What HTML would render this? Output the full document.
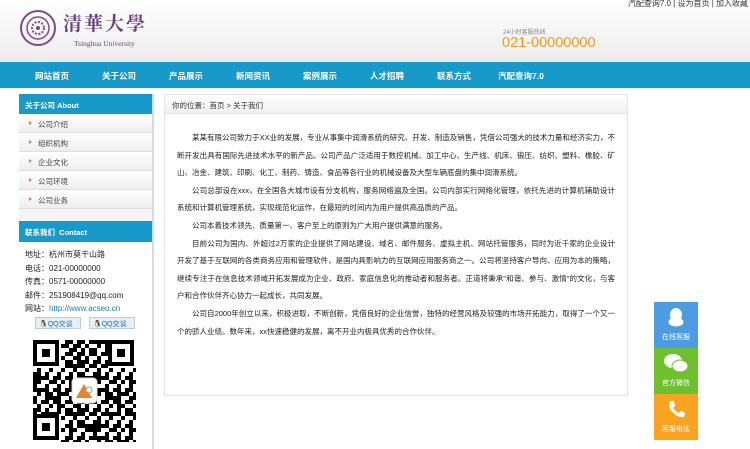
<!DOCTYPE html>
<html><head><meta charset="utf-8"><style>
*{margin:0;padding:0;box-sizing:border-box}
body{width:750px;height:449px;overflow:hidden;background:#fff;font-family:"Liberation Sans","Noto Sans CJK SC",sans-serif;color:#333;position:relative}
.hdr{position:absolute;left:0;top:0;width:750px;height:62px;background:linear-gradient(#fff,#ececec)}
.toplinks{position:absolute;right:2px;top:-2px;font-size:8px;color:#333}
.nav{position:absolute;left:0;top:62px;width:750px;height:26px;background:#1799c9}
.nav span{position:absolute;top:8px;font-size:8.5px;color:#fff;font-weight:bold}
.side{position:absolute;left:19px;top:94px;width:133px}
.sh{height:20px;background:#1799c9;color:#fff;font-size:7.5px;font-weight:bold;padding:6px 0 0 6px}
.item{height:19px;background:linear-gradient(#fff,#eee);border-bottom:1px solid #ddd;font-size:7.5px;padding:5px 0 0 19px;position:relative;color:#444}
.item:before{content:"";position:absolute;left:10px;top:7px;border-left:3px solid #e08030;border-top:2px solid transparent;border-bottom:2px solid transparent}
.shadow{position:absolute;left:152px;top:94px;width:2px;height:355px;background:#d8d8d8}
.contact{font-size:8px;line-height:13.6px;padding:6px 0 0 6px;color:#222}
.crumb{position:absolute;left:164px;top:94px;width:464px;height:302px;border:1px solid #e3e3e3}
.crumb .b{height:19px;background:linear-gradient(#fff,#f0f0f0);border-bottom:1px solid #e3e3e3;font-size:7.5px;padding:5px 0 0 7px;color:#333}
.txt{position:absolute;left:177px;top:129px;width:438px;font-size:7.5px;line-height:17.6px;color:#222;text-align:justify}
.txt p{text-indent:15px}
.fb{position:absolute;left:654px;width:44px;height:46px;color:#fff;font-size:7px;text-align:center}
</style></head><body>
<div class="hdr">
<svg style="position:absolute;left:19px;top:9px" width="38" height="38"><circle cx="19" cy="19" r="17" fill="none" stroke="#7a4c8c" stroke-width="2"/><circle cx="19" cy="19" r="11" fill="none" stroke="#7a4c8c" stroke-width="1.5"/><circle cx="19" cy="19" r="6" fill="none" stroke="#7a4c8c" stroke-width="2" stroke-dasharray="2 1.5"/><circle cx="19" cy="19" r="2" fill="#7a4c8c"/></svg>
<div style="position:absolute;left:63px;top:9px;font-family:'Noto Serif CJK SC',serif;font-size:19px;color:#6a3f80;font-weight:bold;letter-spacing:2px">清華大學</div>
<div style="position:absolute;left:74px;top:39px;font-family:'Liberation Serif',serif;font-size:7.5px;color:#6a3f80">Tsinghua University</div>
<div class="toplinks">汽配查询7.0 | 设为首页 | 加入收藏</div>
<div style="position:absolute;left:503px;top:27px;font-size:6px;color:#888">24小时客服热线</div>
<div style="position:absolute;left:502px;top:35px;font-size:14.5px;color:#f09a20">021-00000000</div>
</div>
<div class="nav"><span style="left:35px">网站首页</span><span style="left:102px">关于公司</span><span style="left:169px">产品展示</span><span style="left:236px">新闻资讯</span><span style="left:303px">案例展示</span><span style="left:370px">人才招聘</span><span style="left:437px">联系方式</span><span style="left:498px">汽配查询7.0</span></div>
<div class="shadow"></div>
<div class="side">
<div class="sh">关于公司 About</div>
<div class="item">公司介绍</div><div class="item">组织机构</div><div class="item">企业文化</div><div class="item">公司环境</div><div class="item">公司业务</div>
<div style="height:12px;background:#f4f4f4"></div>
<div class="sh" style="height:21px">联系我们 &nbsp;Contact</div>
<div class="contact">地址：杭州市莫干山路<br>电话：021-00000000<br>传真：0571-00000000<br>邮件：251908419@qq.com<br>网站：<span style="color:#1a7cc0">http://www.acseo.cn</span></div>
<div style="position:relative;height:16px"><span style="position:absolute;left:16px;top:1px;width:46px;height:12px;background:#e6eef6;border:1px solid #bcd;font-size:7px;color:#1a6cb0;padding:1px 0 0 3px">🐧QQ交谈</span><span style="position:absolute;left:70px;top:1px;width:46px;height:12px;background:#e6eef6;border:1px solid #bcd;font-size:7px;color:#1a6cb0;padding:1px 0 0 3px">🐧QQ交谈</span></div>
<svg style="position:absolute;left:6px;top:238px" width="120" height="117"><rect width="120" height="117" fill="#fff"/>
<defs><pattern id="p1" width="12" height="12" patternUnits="userSpaceOnUse"><rect x="0" y="0" width="4" height="4"/><rect x="8" y="4" width="4" height="8"/><rect x="4" y="8" width="4" height="4"/></pattern><pattern id="p2" width="20" height="16" patternUnits="userSpaceOnUse"><rect x="4" y="0" width="8" height="4"/><rect x="12" y="8" width="4" height="8"/><rect x="0" y="12" width="4" height="4"/></pattern></defs>
<rect x="8" y="8" width="103" height="102" fill="url(#p1)"/><rect x="8" y="8" width="103" height="102" fill="url(#p2)"/>
<g fill="#fff"><rect x="8" y="8" width="28" height="28"/><rect x="83" y="8" width="28" height="28"/><rect x="8" y="82" width="28" height="28"/></g>
<g fill="none" stroke="#000" stroke-width="4"><rect x="10" y="10" width="22" height="22"/><rect x="85" y="10" width="22" height="22"/><rect x="10" y="84" width="22" height="22"/></g>
<rect x="17" y="17" width="8" height="8"/><rect x="92" y="17" width="8" height="8"/><rect x="17" y="91" width="8" height="8"/>
<rect x="47" y="46" width="25" height="25" rx="4" fill="#fff" stroke="#ddd"/><path d="M51 66 L59 52 L67 66Z" fill="#e8832a"/><circle cx="64" cy="58" r="3" fill="#fff" stroke="#999"/></svg>
</div>
<div class="crumb"><div class="b">你的位置：首页 &gt; 关于我们</div></div>
<div class="txt">
<p>某某有限公司致力于XX业的发展，专业从事集中润滑系统的研究、开发、制造及销售，凭借公司强大的技术力量和经济实力，不断开发出具有国际先进技术水平的新产品。公司产品广泛适用于数控机械、加工中心、生产线、机床、锻压、纺织、塑料、橡胶、矿山、冶金、建筑、印刷、化工、制药、铸造、食品等各行业的机械设备及大型车辆底盘的集中润滑系统。</p>
<p>公司总部设在xxx，在全国各大城市设有分支机构，服务网络遍及全国。公司内部实行网络化管理，依托先进的计算机辅助设计系统和计算机管理系统，实现规范化运作，在最短的时间内为用户提供高品质的产品。</p>
<p>公司本着技术领先、质量第一、客户至上的原则为广大用户提供满意的服务。</p>
<p>目前公司为国内、外超过2万家的企业提供了网站建设、域名、邮件服务、虚拟主机、网站托管服务，同时为近千家的企业设计开发了基于互联网的各类商务应用和管理软件，是国内具影响力的互联网应用服务商之一。公司将坚持客户导向、应用为本的策略，继续专注于在信息技术领域开拓发展成为企业、政府、家庭信息化的推动者和服务者。正道将秉承"和谐、参与、激情"的文化，与客户和合作伙伴齐心协力一起成长，共同发展。</p>
<p>公司自2000年创立以来，积极进取，不断创新，凭借良好的企业信誉，独特的经营风格及较强的市场开拓能力，取得了一个又一个的骄人业绩。数年来，xx快速稳健的发展，离不开业内极具优秀的合作伙伴。</p>
</div>
<div class="fb" style="top:302px;background:#4d9be0"><svg width="16" height="20" style="margin-top:5px"><ellipse cx="8" cy="8" rx="6" ry="7" fill="#fff"/><ellipse cx="8" cy="15" rx="7.5" ry="4.5" fill="#fff"/></svg><div style="margin-top:3px">在线客服</div></div>
<div class="fb" style="top:348px;background:#6ec02f"><svg width="26" height="20" style="margin-top:5px"><ellipse cx="10" cy="8" rx="9" ry="7" fill="#fff"/><ellipse cx="17" cy="13" rx="8" ry="6" fill="#fff" stroke="#6ec02f"/></svg><div style="margin-top:3px">官方微信</div></div>
<div class="fb" style="top:394px;background:#f8a422"><svg width="18" height="20" style="margin-top:5px"><path d="M3 2 L7 2 L8 7 L6 9 Q9 13 12 14 L14 12 L18 14 L17 18 Q8 19 2 8 Z" fill="#fff"/></svg><div style="margin-top:3px">客服电话</div></div>
</body></html>
